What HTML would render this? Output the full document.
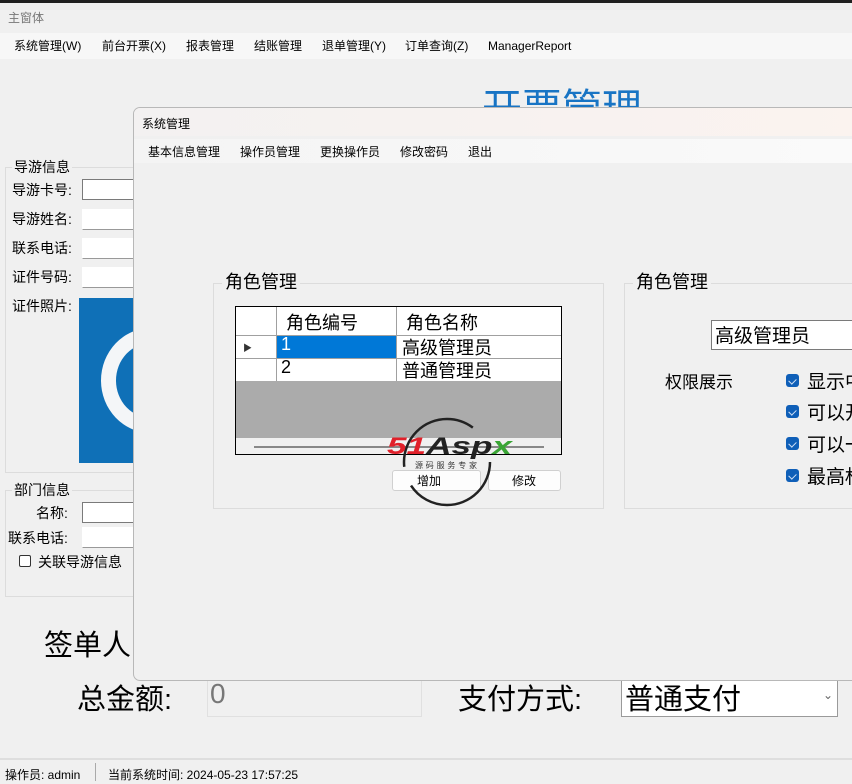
<!DOCTYPE html>
<html><head><meta charset="utf-8"><style>
*{margin:0;padding:0;box-sizing:border-box}
body{width:852px;height:784px;overflow:hidden;background:#f0f0f0;position:relative;font-family:"Liberation Sans","Noto Sans CJK SC",sans-serif;color:#000}
.a{position:absolute;white-space:nowrap}
.s{font-size:12px}
.m{font-size:14px}
.inp{position:absolute;background:#fff;border:1px solid #7a7a7a}
.gb{position:absolute;border:1px solid #dcdcdc}
.cb{position:absolute;width:13px;height:13px;background:#0f5fb8;border-radius:3px}
.cb:after{content:"";position:absolute;left:4px;top:3px;width:4px;height:6px;border:solid #cfe0f5;border-width:0 1px 1px 0;transform:rotate(45deg)}
</style></head><body>
<div class="a" style="left:0;top:0;width:852px;height:3px;background:#202020"></div>
<div class="a s" style="left:8px;top:9px;color:#777">主窗体</div>
<div class="a s" style="left:0;top:33px;width:852px;height:26px;background:#f7f7f7"></div>
<div class="a s" style="left:14px;top:37px">系统管理(W)</div>
<div class="a s" style="left:102px;top:37px">前台开票(X)</div>
<div class="a s" style="left:186px;top:37px">报表管理</div>
<div class="a s" style="left:254px;top:37px">结账管理</div>
<div class="a s" style="left:322px;top:37px">退单管理(Y)</div>
<div class="a s" style="left:405px;top:37px">订单查询(Z)</div>
<div class="a s" style="left:488px;top:39px">ManagerReport</div>
<div class="a" style="left:482px;top:76px;font-size:40px;color:#1874c4">开票管理</div>

<div class="gb" style="left:5px;top:167px;width:140px;height:306px"></div>
<div class="a m" style="left:12px;top:157px;background:#f0f0f0;padding:0 2px">导游信息</div>
<div class="a m" style="left:12px;top:180px">导游卡号:</div><div class="inp" style="left:82px;top:179px;width:60px;height:21px"></div>
<div class="a m" style="left:12px;top:209px">导游姓名:</div><div class="inp" style="left:82px;top:209px;width:60px;height:21px;border-color:#fff;border-bottom-color:#999"></div>
<div class="a m" style="left:12px;top:238px">联系电话:</div><div class="inp" style="left:82px;top:238px;width:60px;height:21px;border-color:#fff;border-bottom-color:#999"></div>
<div class="a m" style="left:12px;top:267px">证件号码:</div><div class="inp" style="left:82px;top:267px;width:60px;height:21px;border-color:#fff;border-bottom-color:#999"></div>
<div class="a m" style="left:12px;top:296px">证件照片:</div>
<div class="a" style="left:79px;top:298px;width:60px;height:165px;background:#0f70b7;overflow:hidden"><div style="position:absolute;left:22px;top:30px;width:100px;height:105px;border-radius:50%;border:15px solid #f4f6f8"></div></div>
<div class="gb" style="left:5px;top:490px;width:140px;height:107px"></div>
<div class="a m" style="left:12px;top:480px;background:#f0f0f0;padding:0 2px">部门信息</div>
<div class="a m" style="left:36px;top:503px">名称:</div><div class="inp" style="left:82px;top:502px;width:60px;height:21px"></div>
<div class="a m" style="left:8px;top:528px">联系电话:</div><div class="inp" style="left:82px;top:527px;width:60px;height:21px;border-color:#fff;border-bottom-color:#999"></div>
<div class="a" style="left:19px;top:555px;width:12px;height:12px;border:1px solid #333;border-radius:2px;background:#fff"></div>
<div class="a m" style="left:38px;top:552px">关联导游信息</div>

<div class="a" style="left:44px;top:622px;font-size:29px">签单人</div>
<div class="a" style="left:77px;top:676px;font-size:29px">总金额:</div>
<div class="a" style="left:207px;top:680px;width:215px;height:37px;border:1px solid #e0e0e0"></div>
<div class="a" style="left:210px;top:678px;font-size:28px;color:#777">0</div>
<div class="a" style="left:458px;top:676px;font-size:29px">支付方式:</div>
<div class="a" style="left:621px;top:677px;width:217px;height:40px;background:#fff;border:1px solid #9a9a9a"></div>
<div class="a" style="left:625px;top:676px;font-size:29px">普通支付</div>
<div class="a" style="left:823px;top:688px;font-size:12px;color:#666">⌄</div>

<div class="a" style="left:0;top:758px;width:852px;height:2px;background:#dedede"></div>
<div class="a s" style="left:5px;top:766px">操作员: admin</div>
<div class="a" style="left:95px;top:763px;width:1px;height:18px;background:#aaa"></div>
<div class="a s" style="left:108px;top:766px">当前系统时间: 2024-05-23 17:57:25</div>

<div class="a" style="left:133px;top:107px;width:730px;height:574px;background:#f0f0f0;border:1px solid #b8b8b8;border-radius:7px 0 0 7px;overflow:hidden">
 <div style="position:absolute;left:0;top:0;width:730px;height:28px;background:linear-gradient(90deg,#f3f1f1,#fbf3ef)"></div>
 <div class="a s" style="left:8px;top:7px">系统管理</div>
 <div style="position:absolute;left:0;top:31px;width:730px;height:24px;background:linear-gradient(90deg,#f4f4f4,#fafafa)"></div>
 <div class="a s" style="left:14px;top:35px">基本信息管理</div>
 <div class="a s" style="left:106px;top:35px">操作员管理</div>
 <div class="a s" style="left:186px;top:35px">更换操作员</div>
 <div class="a s" style="left:266px;top:35px">修改密码</div>
 <div class="a s" style="left:334px;top:35px">退出</div>
</div>

<div class="gb" style="left:213px;top:283px;width:391px;height:226px"></div>
<div class="a" style="left:222px;top:268px;font-size:18px;background:#f0f0f0;padding:0 3px">角色管理</div>
<div class="a" style="left:235px;top:306px;width:327px;height:149px;border:1px solid #000;background:#ababab;overflow:hidden">
 <div style="position:absolute;left:0;top:0;width:327px;height:74px;background:#fff"></div>
 <div style="position:absolute;left:40px;top:0;width:1px;height:74px;background:#a0a0a0"></div>
 <div style="position:absolute;left:160px;top:0;width:1px;height:74px;background:#a0a0a0"></div>
 <div style="position:absolute;left:0;top:28px;width:327px;height:1px;background:#a0a0a0"></div>
 <div style="position:absolute;left:0;top:51px;width:327px;height:1px;background:#a0a0a0"></div>
 <div style="position:absolute;left:41px;top:29px;width:119px;height:22px;background:#0078d7"></div>
 <div class="a" style="left:50px;top:2px;font-size:18px">角色编号</div>
 <div class="a" style="left:170px;top:2px;font-size:18px">角色名称</div>
 <div class="a" style="left:7px;top:34px;font-size:9px;color:#333">▶</div>
 <div class="a" style="left:45px;top:27px;font-size:18px;color:#fff">1</div>
 <div class="a" style="left:166px;top:27px;font-size:18px">高级管理员</div>
 <div class="a" style="left:45px;top:50px;font-size:18px">2</div>
 <div class="a" style="left:166px;top:50px;font-size:18px">普通管理员</div>
 <div style="position:absolute;left:0;top:131px;width:327px;height:18px;background:#f0f0f0"></div>
 <div style="position:absolute;left:18px;top:139px;width:290px;height:2px;background:#888"></div>
</div>
<div class="a" style="left:392px;top:470px;width:89px;height:21px;background:#fdfdfd;border:1px solid #d0d0d0;border-radius:3px"></div>
<div class="a s" style="left:417px;top:472px">增加</div>
<div class="a" style="left:488px;top:470px;width:73px;height:21px;background:#fdfdfd;border:1px solid #d0d0d0;border-radius:3px"></div>
<div class="a s" style="left:512px;top:472px">修改</div>
<svg class="a" style="left:385px;top:400px" width="140" height="110">
 <circle cx="62" cy="62" r="43" fill="none" stroke="#222" stroke-width="2.5" stroke-dasharray="110 20 100 40"/>
 <text x="2" y="54" textLength="125" lengthAdjust="spacingAndGlyphs" font-family="Liberation Sans" font-style="italic" font-weight="bold" font-size="24"><tspan fill="#e0202a">51</tspan><tspan fill="#222">Asp</tspan><tspan fill="#3aa535">x</tspan></text>
 <text x="30" y="68" textLength="62" font-family="Noto Sans CJK SC" font-size="8" fill="#333">源码服务专家</text>
</svg>

<div class="gb" style="left:624px;top:283px;width:240px;height:226px"></div>
<div class="a" style="left:633px;top:268px;font-size:18px;background:#f0f0f0;padding:0 3px">角色管理</div>
<div class="a" style="left:711px;top:320px;width:150px;height:30px;background:#fff;border:1px solid #7a7a7a"></div>
<div class="a" style="left:715px;top:321px;font-size:19px">高级管理员</div>
<div class="a" style="left:665px;top:368px;font-size:17px">权限展示</div>
<div class="cb" style="left:786px;top:374px"></div><div class="a" style="left:807px;top:367px;font-size:19px">显示中</div>
<div class="cb" style="left:786px;top:405px"></div><div class="a" style="left:807px;top:398px;font-size:19px">可以开</div>
<div class="cb" style="left:786px;top:437px"></div><div class="a" style="left:807px;top:430px;font-size:19px">可以一</div>
<div class="cb" style="left:786px;top:469px"></div><div class="a" style="left:807px;top:462px;font-size:19px">最高权</div>
</body></html>
